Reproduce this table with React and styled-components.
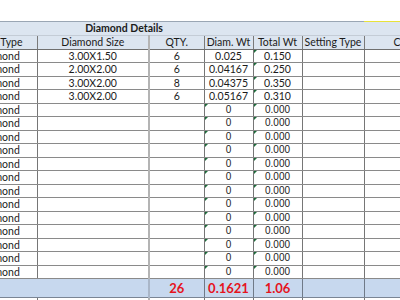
import styled, { createGlobalStyle } from 'styled-components';

const GlobalStyle = createGlobalStyle`
  html, body {
    margin: 0;
    padding: 0;
    background: #fff;
  }
  body {
    font-family: Lato, "Liberation Sans", sans-serif;
  }
`;

const Sheet = styled.div`
  width: 400px;
  height: 300px;
  overflow: hidden;
  background: #fff;
`;

const Table = styled.table`
  border-collapse: collapse;
  table-layout: fixed;
  width: 502px;
  margin-left: -58px;
  font-size: 10.5px;
  color: #1b1b1b;
`;

const Col = styled.col`
  width: ${(p) => p.$w}px;
`;

const SpacerRow = styled.tr`
  height: 21px;
`;

const SpacerCell = styled.td`
  padding: 0;
  border-bottom: ${(p) => (p.$mark ? '1px solid #e8e23a' : 'none')};
`;

const HeadRow = styled.tr`
  height: 14px;
  background: #dce5f0;
`;

const TitleCell = styled.th`
  padding: 0 0 0 4px;
  font-weight: 700;
  text-align: center;
  border-top: 1px solid #9aa6b4;
  border-bottom: 1px solid #c4ccd6;
  line-height: 1;
`;

const HeadCell = styled.th`
  padding: 0;
  font-weight: 400;
  text-align: center;
  white-space: nowrap;
  overflow: hidden;
  line-height: 1;
  border-top: 1px solid #c4ccd6;
  border-bottom: 1px solid #6f6f6f;
  border-right: ${(p) => (p.$soft ? '2px solid #b4b4b4' : '1px solid #7a7a7a')};
`;

const Row = styled.tr`
  height: 13.5px;
`;

const Cell = styled.td`
  position: relative;
  padding: 0;
  text-align: center;
  white-space: nowrap;
  overflow: hidden;
  line-height: 1;
  border-bottom: 1px solid #8a8a8a;
  border-right: ${(p) => (p.$soft ? '2px solid #b4b4b4' : '1px solid #767676')};
  font-family: ${(p) => (p.$arial ? '"Liberation Sans", Arial, sans-serif' : 'Lato, "Liberation Sans", sans-serif')};
  font-size: ${(p) => (p.$arial ? '10px' : '10.5px')};

  &::before {
    content: ${(p) => (p.$flag ? "''" : 'none')};
    position: absolute;
    top: 0;
    left: 0;
    border-top: 3px solid #1d6b3a;
    border-right: 3px solid transparent;
  }
`;

const TotalRow = styled.tr`
  height: 19px;
  background: #c7d8ee;
`;

const TotalCell = styled.td`
  padding: 0;
  text-align: center;
  line-height: 1;
  font-weight: 700;
  font-size: 13px;
  color: #e5131d;
  border-top: 1px solid #6f7a88;
  border-bottom: 1px solid #7a8594;
  border-right: ${(p) => (p.$soft ? '2px solid #a9b6c8' : '1px solid #6f7a88')};
`;

const widths = [95, 112, 55, 49, 49, 62, 80];

const filled = [
  ['3.00X1.50', '6', '0.025', '0.150'],
  ['2.00X2.00', '6', '0.04167', '0.250'],
  ['3.00X2.00', '8', '0.04375', '0.350'],
  ['3.00X2.00', '6', '0.05167', '0.310'],
];

const rows = [
  ...filled.map((r) => ({ size: r[0], qty: r[1], wt: r[2], total: r[3], blank: false })),
  ...Array.from({ length: 13 }, () => ({ size: '', qty: '', wt: '0', total: '0.000', blank: true })),
];

export default function App() {
  return (
    <Sheet>
      <GlobalStyle />
      <Table>
        <colgroup>
          {widths.map((w, i) => (
            <Col key={i} $w={w} />
          ))}
        </colgroup>
        <tbody>
          <SpacerRow>
            <SpacerCell colSpan={6} />
            <SpacerCell $mark />
          </SpacerRow>
          <HeadRow>
            <TitleCell colSpan={5}>Diamond Details</TitleCell>
            <TitleCell />
            <TitleCell />
          </HeadRow>
          <HeadRow>
            <HeadCell>Diamond Type</HeadCell>
            <HeadCell $soft>Diamond Size</HeadCell>
            <HeadCell>QTY.</HeadCell>
            <HeadCell>Diam. Wt</HeadCell>
            <HeadCell>Total Wt</HeadCell>
            <HeadCell>Setting Type</HeadCell>
            <HeadCell>Cost</HeadCell>
          </HeadRow>
          {rows.map((r, i) => (
            <Row key={i}>
              <Cell>Lab Diamond</Cell>
              <Cell $soft>{r.size}</Cell>
              <Cell>{r.qty}</Cell>
              <Cell $arial={r.blank} $flag={r.blank}>{r.wt}</Cell>
              <Cell $arial={r.blank} $flag>{r.total}</Cell>
              <Cell />
              <Cell />
            </Row>
          ))}
          <TotalRow>
            <TotalCell colSpan={2} $soft />
            <TotalCell>26</TotalCell>
            <TotalCell>0.1621</TotalCell>
            <TotalCell>1.06</TotalCell>
            <TotalCell />
            <TotalCell />
          </TotalRow>
          <Row>
            <Cell />
            <Cell $soft />
            <Cell />
            <Cell />
            <Cell />
            <Cell />
            <Cell />
          </Row>
        </tbody>
      </Table>
    </Sheet>
  );
}
